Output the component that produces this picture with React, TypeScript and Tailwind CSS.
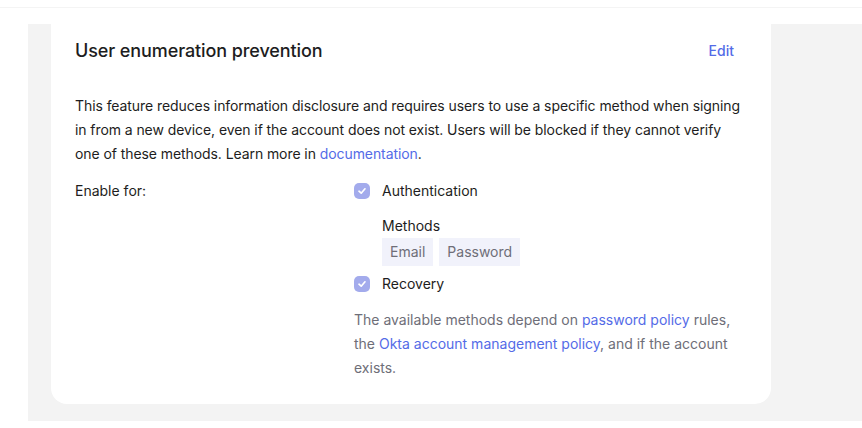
export default function App() {
  return (
    <div className="w-[862px] h-[428px] bg-white font-['Inter',sans-serif] text-[#1d1d21] overflow-hidden">
      <div className="h-[8px] border-b border-[#f4f4f4]" />
      <div className="h-[16px]" />
      <div className="ml-[28px] bg-[#f3f3f3] pl-[23px] pr-[91px] pb-[17px]">
        {/* Card */}
        <div className="bg-white rounded-b-[16px] px-[24px] pt-[14px] pb-[24px]">
          <div className="flex items-center justify-between h-[24px]">
            <h2 className="text-[18px] font-medium tracking-[-0.1px]">User enumeration prevention</h2>
            <button className="text-[14px] font-medium text-[#546be7] mr-[13px]">Edit</button>
          </div>

          <p className="mt-[32px] text-[14px] leading-[24px] tracking-[-0.08px]">
            This feature reduces information disclosure and requires users to use a specific method when signing
            in from a new device, even if the account does not exist. Users will be blocked if they cannot verify
            one of these methods. Learn more in <a className="text-[#546be7]">documentation</a>.
          </p>

          <div className="mt-[13px] flex text-[14px] leading-[24px]">
            <div className="w-[279px]">Enable for:</div>
            <div className="flex-1">
              <label className="flex items-center gap-[12px]">
                <CheckIcon />
                <span>Authentication</span>
              </label>
              <div className="ml-[28px] mt-[11px]">
                <div>Methods</div>
                <div className="flex gap-[6px]">
                  <span className="bg-[#f1f2fb] text-[#6e6e78] px-[8px] h-[28px] flex items-center">Email</span>
                  <span className="bg-[#f1f2fb] text-[#6e6e78] px-[8px] h-[28px] flex items-center">Password</span>
                </div>
              </div>
              <label className="mt-[6px] flex items-center gap-[12px]">
                <CheckIcon />
                <span>Recovery</span>
              </label>
              <p className="mt-[12px] text-[#6e6e78] max-w-[393px]">
                The available methods depend on <a className="text-[#546be7]">password policy</a> rules,
                the <a className="text-[#546be7]">Okta account management policy</a>, and if the account exists.
              </p>
            </div>
          </div>
        </div>
      </div>
    </div>
  )
}

function CheckIcon() {
  return (
    <span className="w-[16px] h-[16px] rounded-[5px] bg-[#a3abec] flex items-center justify-center">
      <svg width="10" height="10" viewBox="0 0 10 10" fill="none">
        <path d="M2 5.2 L4.2 7.2 L8 2.8" stroke="white" strokeWidth="1.7" strokeLinecap="round" strokeLinejoin="round" />
      </svg>
    </span>
  )
}
